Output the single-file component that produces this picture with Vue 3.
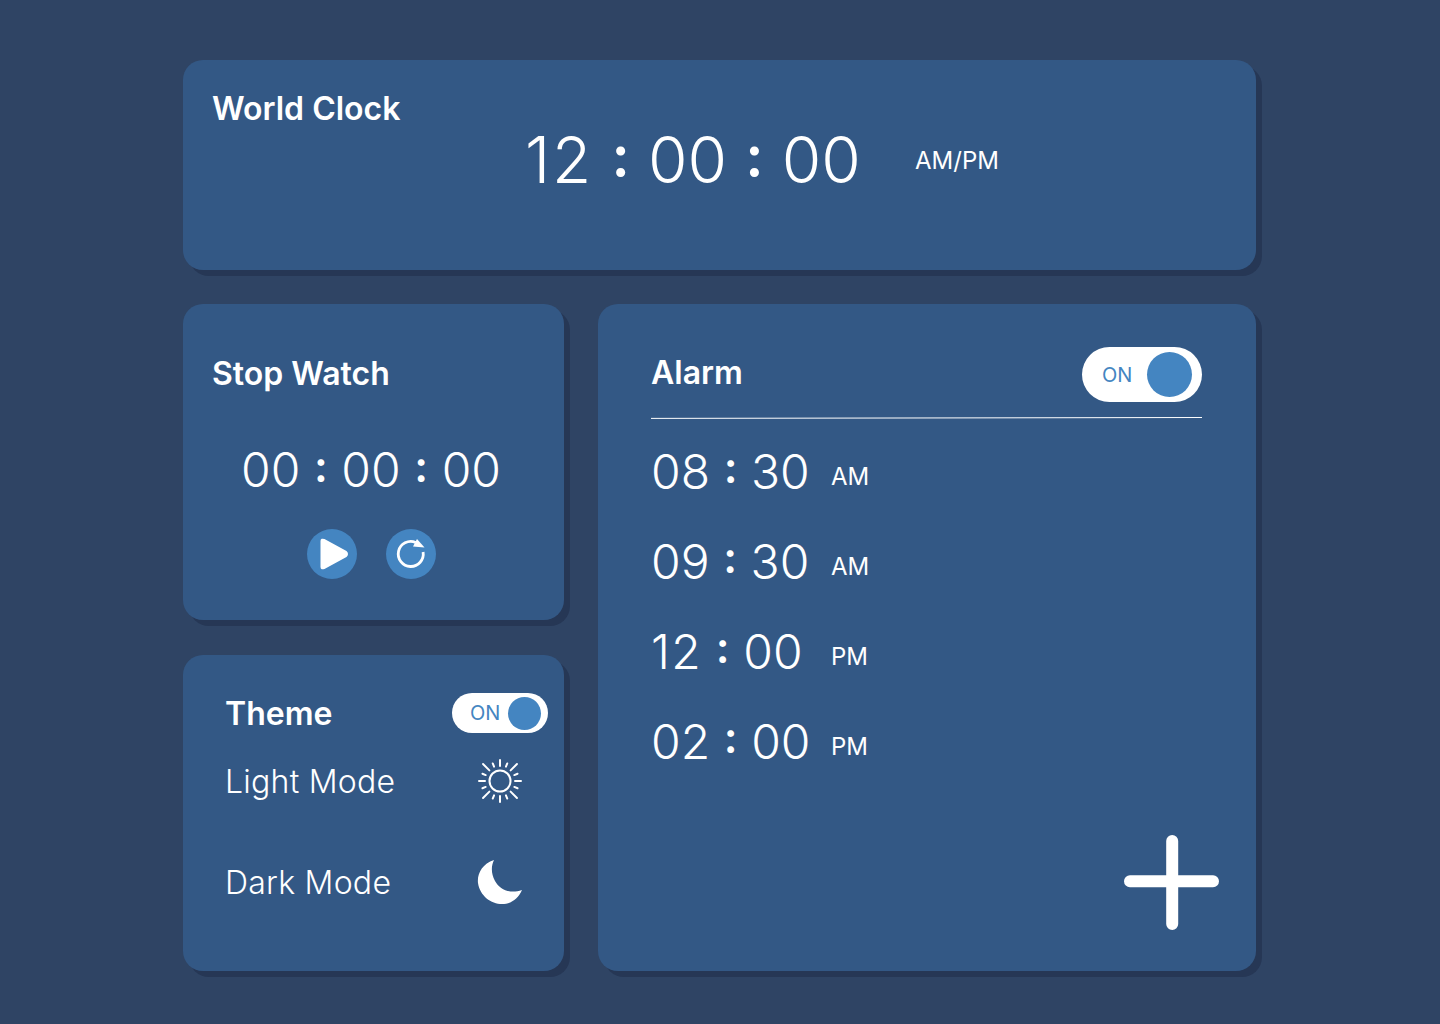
<script setup>
const alarms = [
  { time: '08 : 30', period: 'AM' },
  { time: '09 : 30', period: 'AM' },
  { time: '12 : 00', period: 'PM' },
  { time: '02 : 00', period: 'PM' },
]
const longRays = [0, 90, 180, 270]
const diagRays = [45, 135, 225, 315]
const shortRays = [22.5, 67.5, 112.5, 157.5, 202.5, 247.5, 292.5, 337.5]
const parts = (t) => t.split(' : ')
</script>

<template>
  <div class="page">
    <div class="board">
      <section class="card world">
        <h2 class="title">World Clock</h2>
        <div class="world-time">
          <template v-for="(p, i) in parts('12 : 00 : 00')" :key="i">
            <span v-if="i" class="colon">:</span><span :class="{ hour12: p === '12' }">{{ p }}</span>
          </template>
        </div>
        <div class="world-period">AM/PM</div>
      </section>

      <div class="left">
        <section class="card watch">
          <h2 class="title">Stop Watch</h2>
          <div class="watch-time">
            <template v-for="(p, i) in parts('00 : 00 : 00')" :key="i">
              <span v-if="i" class="colon">:</span><span>{{ p }}</span>
            </template>
          </div>
          <div class="watch-btns">
            <button class="round">
              <svg class="play" width="30" height="34" viewBox="0 0 30 34">
                <path d="M3.5 4 L3.5 30 Q3.5 32 6 31 L28 19 Q30 17 28 15 L6 3 Q3.5 2 3.5 4Z" fill="#fff" stroke="#fff" stroke-width="2" stroke-linejoin="round" />
              </svg>
            </button>
            <button class="round">
              <svg width="32" height="32" viewBox="0 0 32 32">
                <path d="M20.7 4.5 A12.5 12.5 0 1 0 28.1 14" fill="none" stroke="#fff" stroke-width="2.8" />
                <path d="M22 1 L29.5 9.5 L18 8.5Z" fill="#fff" />
              </svg>
            </button>
          </div>
        </section>

        <section class="card theme">
          <div class="theme-head">
            <h2 class="title">Theme</h2>
            <div class="toggle small">
              <span>ON</span>
              <i></i>
            </div>
          </div>
          <div class="mode light">
            <span>Light Mode</span>
            <svg width="44" height="44" viewBox="0 0 44 44">
              <circle cx="22" cy="22" r="10.5" fill="none" stroke="#fff" stroke-width="2" />
              <g stroke="#fff" stroke-width="2" stroke-linecap="round">
                <line v-for="r in longRays" :key="r" x1="22" y1="1" x2="22" y2="7" :transform="`rotate(${r} 22 22)`" />
                <line v-for="r in diagRays" :key="r" x1="22" y1="-2" x2="22" y2="7" :transform="`rotate(${r} 22 22)`" />
                <line v-for="r in shortRays" :key="r" x1="22" y1="3" x2="22" y2="6.5" :transform="`rotate(${r} 22 22)`" />
              </g>
            </svg>
          </div>
          <div class="mode dark">
            <span>Dark Mode</span>
            <svg class="moon" width="46" height="46" viewBox="0 0 46 46">
              <path d="M17 1 C5 5 0 15 1 24 C3 37 14 45 25 45 C34 45 41 40 45 31 C33 35 23 31 18 22 C14 15 14 7 17 1Z" fill="#fff" />
            </svg>
          </div>
        </section>
      </div>

      <section class="card alarm">
        <div class="alarm-head">
          <h2 class="title">Alarm</h2>
          <div class="toggle">
            <span>ON</span>
            <i></i>
          </div>
        </div>
        <svg class="rule" width="551" height="2" viewBox="0 0 551 2">
          <line x1="0" y1="1.4" x2="551" y2="0.5" stroke="#fff" stroke-width="1" />
        </svg>
        <div class="alarm-list">
          <div v-for="a in alarms" :key="a.time" class="alarm-row">
            <span class="alarm-time">
              <template v-for="(p, i) in parts(a.time)" :key="i">
                <span v-if="i" class="colon">:</span><span :class="{ hour12: p === '12' }">{{ p }}</span>
              </template>
            </span>
            <span class="alarm-period">{{ a.period }}</span>
          </div>
        </div>
        <div class="add">
          <svg width="96" height="96" viewBox="0 0 96 96">
            <path d="M49.2 7 V90 M7 47.3 H90" stroke="#fff" stroke-width="12" stroke-linecap="round" />
          </svg>
        </div>
      </section>
    </div>
  </div>
</template>

<style>
html, body {
  margin: 0;
  background: #2f4464;
}
</style>

<style scoped>
.page {
  width: 1440px;
  height: 1024px;
  padding: 60px 0 0 183px;
  box-sizing: border-box;
  background: #2f4464;
  color: #fff;
  font-family: Inter, "Liberation Sans", sans-serif;
}
.board {
  width: 1073px;
  display: grid;
  grid-template-columns: 381px 658px;
  grid-template-rows: 210px 667px;
  column-gap: 34px;
  row-gap: 34px;
}
.card {
  background: #335885;
  border-radius: 20px;
  box-shadow: 6px 6px 0 #263755;
  box-sizing: border-box;
}
.title {
  margin: 0;
  font-size: 32px;
  line-height: 36px;
  font-weight: 600;
}
.colon {
  display: inline-block;
  width: 0.95em;
  text-align: center;
  font-size: 0.9em;
  font-weight: 600;
  line-height: 1;
  vertical-align: 0.12em;
}
.hour12 {
  letter-spacing: 0.03em;
}
.world {
  grid-column: 1 / 3;
  display: flex;
  align-items: flex-start;
  padding: 31px 0 0 29px;
}
.world .title {
  width: 313px;
}
.world-time {
  width: 390px;
  margin-top: 32px;
  font-size: 64px;
  line-height: 74px;
  font-weight: 350;
  white-space: nowrap;
}
.world-period {
  margin-top: 55px;
  font-size: 24px;
  line-height: 30px;
}
.left {
  display: flex;
  flex-direction: column;
  gap: 35px;
}
.watch {
  height: 316px;
  padding: 52px 0 0 29px;
}
.watch-time {
  margin: 50px 0 0 29px;
  font-size: 48px;
  line-height: 56px;
  font-weight: 350;
  white-space: nowrap;
}
.watch-btns {
  display: flex;
  gap: 29px;
  margin: 31px 0 0 95px;
}
.round {
  width: 50px;
  height: 50px;
  padding: 0;
  border: 0;
  border-radius: 50%;
  background: #4485c1;
  display: flex;
  align-items: center;
  justify-content: center;
}
.play {
  margin-left: 2px;
  flex: none;
}
.theme {
  height: 316px;
  padding: 38px 16px 0 42px;
}
.theme-head {
  display: flex;
  justify-content: space-between;
  align-items: center;
  height: 40px;
}
.theme-head .title {
  margin-top: 1px;
}
.mode {
  display: flex;
  justify-content: space-between;
  align-items: center;
  font-size: 32px;
  font-weight: 350;
  letter-spacing: 0.25px;
  width: 297px;
}
.mode.light {
  margin-top: 26px;
}
.mode.dark {
  margin-top: 56px;
}
.moon {
  margin-right: -1px;
}
.toggle {
  width: 120px;
  height: 55px;
  border-radius: 28px;
  background: #fff;
  color: #4485c1;
  display: flex;
  align-items: center;
  justify-content: space-between;
  padding: 0 10px 0 20px;
  box-sizing: border-box;
  font-size: 20px;
  letter-spacing: 0;
}
.toggle i {
  width: 45px;
  height: 45px;
  border-radius: 50%;
  background: #4485c1;
}
.toggle.small {
  width: 96px;
  height: 40px;
  padding: 0 7px 0 18px;
}
.toggle.small i {
  width: 33px;
  height: 33px;
}
.alarm {
  position: relative;
  padding: 43px 54px 0 53px;
}
.alarm-head {
  display: flex;
  justify-content: space-between;
  align-items: center;
  height: 55px;
}
.alarm-head .title {
  margin-top: -4px;
}
.rule {
  display: block;
  margin-top: 15px;
}
.alarm-list {
  margin-top: 7px;
}
.alarm-row {
  display: flex;
  height: 90px;
  align-items: center;
}
.alarm-time {
  width: 180px;
  font-size: 48px;
  font-weight: 350;
  white-space: nowrap;
}
.alarm-period {
  margin-top: 10px;
  font-size: 24px;
}
.add {
  position: absolute;
  right: 37px;
  bottom: 41px;
  width: 96px;
  height: 96px;
}
</style>
